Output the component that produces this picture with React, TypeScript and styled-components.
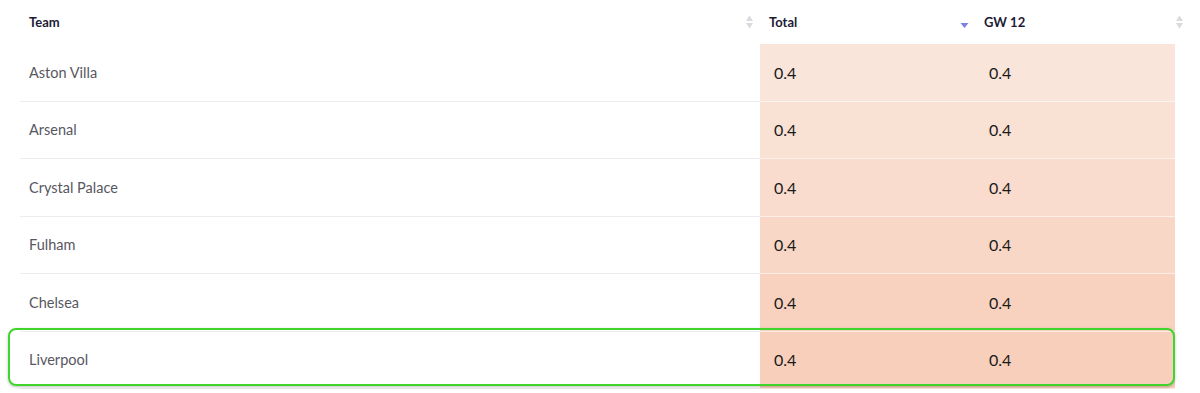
import styled, { createGlobalStyle } from 'styled-components';

const GlobalStyle = createGlobalStyle`
  body {
    margin: 0;
    background: #ffffff;
    font-family: Lato, "Noto Sans", sans-serif;
  }
`;

type Team = { name: string; total: string; gw: string; tint: string; highlight?: boolean };

const teams: Team[] = [
  { name: 'Aston Villa', total: '0.4', gw: '0.4', tint: '#f9e5da' },
  { name: 'Arsenal', total: '0.4', gw: '0.4', tint: '#f9e1d4' },
  { name: 'Crystal Palace', total: '0.4', gw: '0.4', tint: '#f9dccd' },
  { name: 'Fulham', total: '0.4', gw: '0.4', tint: '#f9d7c6' },
  { name: 'Chelsea', total: '0.4', gw: '0.4', tint: '#f8d2bf' },
  { name: 'Liverpool', total: '0.4', gw: '0.4', tint: '#f8cfba', highlight: true },
];

const SortIcon = ({ active }: { active?: boolean }) =>
  active ? (
    <svg width="9" height="14" viewBox="0 0 9 14">
      <path d="M0.5 8 L8.5 8 L4.5 13 Z" fill="#7c80df" />
    </svg>
  ) : (
    <svg width="9" height="14" viewBox="0 0 9 14">
      <path d="M4.5 0.5 L8 6 L1 6 Z" fill="#d9d9de" />
      <path d="M1 8 L8 8 L4.5 13.5 Z" fill="#d9d9de" />
    </svg>
  );

const App = () => {
  return (
    <>
      <GlobalStyle />
      <Wrapper>
        <HeaderRow>
          <HeadCell>
            <HeadLabel>Team</HeadLabel>
            <SortIcon />
          </HeadCell>
          <HeadCell>
            <HeadLabel>Total</HeadLabel>
            <SortIcon active />
          </HeadCell>
          <HeadCell>
            <HeadLabel>GW 12</HeadLabel>
            <SortIcon />
          </HeadCell>
        </HeaderRow>
        {teams.map((t) => (
          <Row key={t.name}>
            <NameCell>{t.name}</NameCell>
            <ValueCell style={{ background: t.tint }}>{t.total}</ValueCell>
            <ValueCell style={{ background: t.tint }}>{t.gw}</ValueCell>
            {t.highlight && <Highlight />}
          </Row>
        ))}
      </Wrapper>
    </>
  );
};

const Wrapper = styled.div`
  padding-left: 20px;
  width: 1170px;
`;

const HeaderRow = styled.div`
  display: grid;
  grid-template-columns: 740px 215px 215px;
  height: 44px;
`;

const HeadCell = styled.div`
  display: flex;
  align-items: center;
  justify-content: space-between;
  padding: 0 6px 0 9px;
  svg {
    flex-shrink: 0;
  }
`;

const HeadLabel = styled.span`
  font-size: 13px;
  font-weight: 700;
  color: #1d1b36;
`;

const Row = styled.div`
  position: relative;
  display: grid;
  grid-template-columns: 740px 215px 200px;
  width: 1155px;
  height: 57.5px;
  box-sizing: border-box;
`;

const NameCell = styled.div`
  display: flex;
  align-items: center;
  padding-left: 9px;
  font-size: 14.5px;
  color: #57575f;
  border-bottom: 1px solid #ececee;
`;

const ValueCell = styled.div`
  display: flex;
  align-items: center;
  padding-left: 14px;
  font-size: 16px;
  color: #1a1a1a;
  border-bottom: 1px solid rgba(255, 255, 255, 0.55);
`;

const Highlight = styled.div`
  position: absolute;
  left: -12px;
  right: 0;
  top: -4px;
  bottom: 3px;
  border: 2.5px solid #3fd52c;
  border-radius: 8px;
  box-shadow: 0 1px 3px rgba(0, 0, 0, 0.25);
  pointer-events: none;
`;

export default App;
